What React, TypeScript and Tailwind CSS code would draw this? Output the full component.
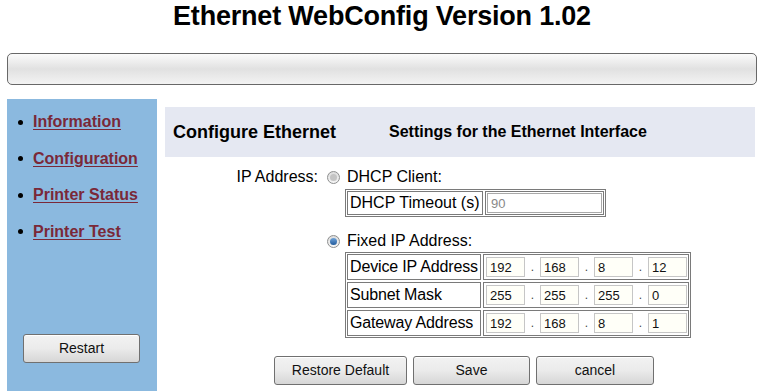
import { useState } from 'react';

const navItems = ['Information', 'Configuration', 'Printer Status', 'Printer Test'];

const ipRows = [
  { label: 'Device IP Address', parts: ['192', '168', '8', '12'] },
  { label: 'Subnet Mask', parts: ['255', '255', '255', '0'] },
  { label: 'Gateway Address', parts: ['192', '168', '8', '1'] },
];

const Radio = ({ checked, onClick }: { checked: boolean; onClick: () => void }) => (
  <span
    onClick={onClick}
    className="w-[13px] h-[13px] rounded-full border border-[#8e8f8f] bg-gradient-to-b from-[#dcdcdc] to-[#f6f6f6] flex items-center justify-center cursor-pointer shrink-0"
  >
    {checked ? (
      <span className="w-[7px] h-[7px] rounded-full bg-gradient-to-b from-[#6fa3d8] to-[#1f5a9c]" />
    ) : (
      <span className="w-[7px] h-[7px] rounded-full bg-[#c4c4c4]" />
    )}
  </span>
);

const GreyButton = ({ label, width }: { label: string; width: string }) => (
  <button
    className={`${width} h-[29px] rounded-[3px] border border-[#707070] bg-gradient-to-b from-[#f2f2f2] via-[#ebebeb] to-[#d6d6d6] text-[14px] text-[#111] shadow-[inset_0_1px_0_#fff]`}
  >
    {label}
  </button>
);

export default function App() {
  const [mode, setMode] = useState<'dhcp' | 'fixed'>('fixed');

  return (
    <div className="w-[764px] h-[391px] overflow-hidden bg-white font-['Liberation_Sans',Arial,sans-serif] text-black">
      <h1 className="pt-[3px] text-center text-[27px] leading-[27px] font-bold tracking-[-0.2px]">
        Ethernet WebConfig Version 1.02
      </h1>

      <div className="mt-[23px] mx-[7px] h-[32px] rounded-[5px] border border-[#686868] bg-gradient-to-b from-[#fbfbfb] via-[#e1e1e1] to-[#f3f3f3]" />

      <div className="mt-[14px] flex">
        {/* side menu */}
        <div className="ml-[7px] w-[150px] h-[292px] bg-[#8bb9df] flex flex-col pt-[13px] pb-[28px]">
          <ul className="flex flex-col gap-[16.5px]">
            {navItems.map((item) => (
              <li key={item} className="flex items-center h-[20px]">
                <span className="ml-[11px] mr-[10px] w-[5px] h-[5px] rounded-full bg-black" />
                <a href="#" className="text-[16px] font-bold text-[#7a2838] underline underline-offset-2">
                  {item}
                </a>
              </li>
            ))}
          </ul>
          <div className="mt-auto pl-[16px]">
            <GreyButton label="Restart" width="w-[117px]" />
          </div>
        </div>

        {/* main area */}
        <div className="ml-[8px] mt-[8px] flex-1">
          <div className="w-[590px] h-[50px] bg-[#e5e8f2] flex items-center pl-[8px]">
            <span className="w-[216px] text-[18px] font-bold">Configure Ethernet</span>
            <span className="text-[16px] font-bold">Settings for the Ethernet Interface</span>
          </div>

          <div className="mt-[11px] text-[16px] leading-[18px]">
            <div className="flex items-center">
              <span className="w-[153px] text-right">IP Address:</span>
              <span className="ml-[9px]">
                <Radio checked={mode === 'dhcp'} onClick={() => setMode('dhcp')} />
              </span>
              <span className="ml-[7px]">DHCP Client:</span>
            </div>

            <div className="ml-[180px] mt-[3px] w-[261px] border border-[#7a7a7a] p-[1px] flex gap-[2px]">
              <div className="w-[136px] h-[24px] border border-[#7a7a7a] flex items-center pl-[2px] whitespace-nowrap">
                DHCP Timeout (s)
              </div>
              <div className="flex-1 h-[24px] border border-[#7a7a7a] flex items-center px-[1px]">
                <input
                  defaultValue="90"
                  disabled
                  className="w-full h-[20px] border border-[#a9a9a9] bg-white text-[13px] text-[#888] px-[3px] outline-none"
                />
              </div>
            </div>

            <div className="flex items-center mt-[15px]">
              <span className="ml-[162px]">
                <Radio checked={mode === 'fixed'} onClick={() => setMode('fixed')} />
              </span>
              <span className="ml-[7px]">Fixed IP Address:</span>
            </div>

            <div className="ml-[180px] mt-[2px] w-[346px] border border-[#7a7a7a] p-[1px] flex flex-col gap-[2px]">
              {ipRows.map((row) => (
                <div key={row.label} className="flex gap-[2px]">
                  <div className="w-[136px] h-[26px] border border-[#7a7a7a] flex items-center pl-[2px] whitespace-nowrap overflow-hidden tracking-[-0.15px]">
                    {row.label}
                  </div>
                  <div className="flex-1 h-[26px] border border-[#7a7a7a] flex items-center pl-[2px] pr-[1px]">
                    {row.parts.map((p, i) => (
                      <div key={i} className="flex items-center">
                        {i > 0 && <span className="w-[15px] text-center text-[12px] text-[#444]">.</span>}
                        <input
                          defaultValue={p}
                          className="w-[39px] h-[20px] border border-[#c6c6c6] bg-[#fffff8] text-[13px] text-[#111] px-[3px] outline-none"
                        />
                      </div>
                    ))}
                  </div>
                </div>
              ))}
            </div>
          </div>

          <div className="mt-[18px] pl-[109px] flex gap-[6px]">
            <GreyButton label="Restore Default" width="w-[133px]" />
            <GreyButton label="Save" width="w-[117px]" />
            <GreyButton label="cancel" width="w-[118px]" />
          </div>
        </div>
      </div>
    </div>
  );
}
